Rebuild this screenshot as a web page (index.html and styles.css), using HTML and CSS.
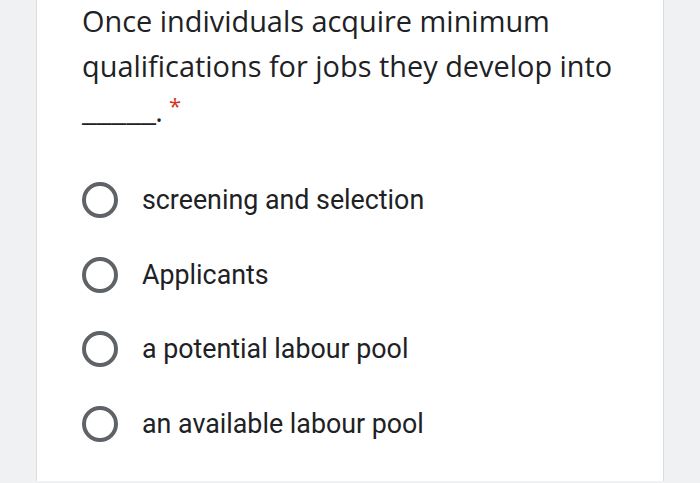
FILE: index.html
```html
<!DOCTYPE html>
<html>
<head>
<meta charset="utf-8">
<link rel="stylesheet" href="styles.css">
</head>
<body>
<div class="card">
  <div class="question">Once individuals acquire minimum qualifications for jobs they develop into <span class="blank">_____</span>.<span class="req">*</span></div>
  <div class="options">
    <div class="option"><span class="radio"></span><span class="label">screening and selection</span></div>
    <div class="option"><span class="radio"></span><span class="label">Applicants</span></div>
    <div class="option"><span class="radio"></span><span class="label">a potential labour pool</span></div>
    <div class="option"><span class="radio"></span><span class="label">an available labour pool</span></div>
  </div>
</div>
</body>
</html>
```
FILE: styles.css
```css
html, body {
  margin: 0;
  padding: 0;
  background: #eff1f3;
  height: 100%;
  overflow: hidden;
}
.card {
  margin-left: 36px;
  width: 628px;
  height: 483px;
  background: #fff;
  border-left: 1px solid #dadce0;
  border-right: 1px solid #dadce0;
  padding: 0 0 0 45px;
  box-sizing: border-box;
}
.question {
  font-family: "Open Sans", sans-serif;
  font-size: 28.9px;
  line-height: 45px;
  color: #202124;
  width: 570px;
  margin-top: -2px;
}
.blank {
  display: inline-block;
  transform: scaleX(1.17);
  transform-origin: left center;
  margin-right: 10px;
  position: relative;
  top: -1px;
}
.req {
  color: #d93025;
  font-size: 22px;
  display: inline-block;
  vertical-align: top;
  line-height: 22px;
  margin-top: 6px;
  margin-left: 6px;
}
.options {
  margin-top: 30px;
  display: flex;
  flex-direction: column;
}
.option {
  display: flex;
  align-items: center;
  height: 74.5px;
}
.radio {
  width: 28px;
  height: 28px;
  border: 4px solid #5f6368;
  border-radius: 50%;
  margin-right: 24px;
  flex: none;
}
.label {
  font-family: Roboto, sans-serif;
  font-size: 26.8px;
  color: #202124;
}
```
